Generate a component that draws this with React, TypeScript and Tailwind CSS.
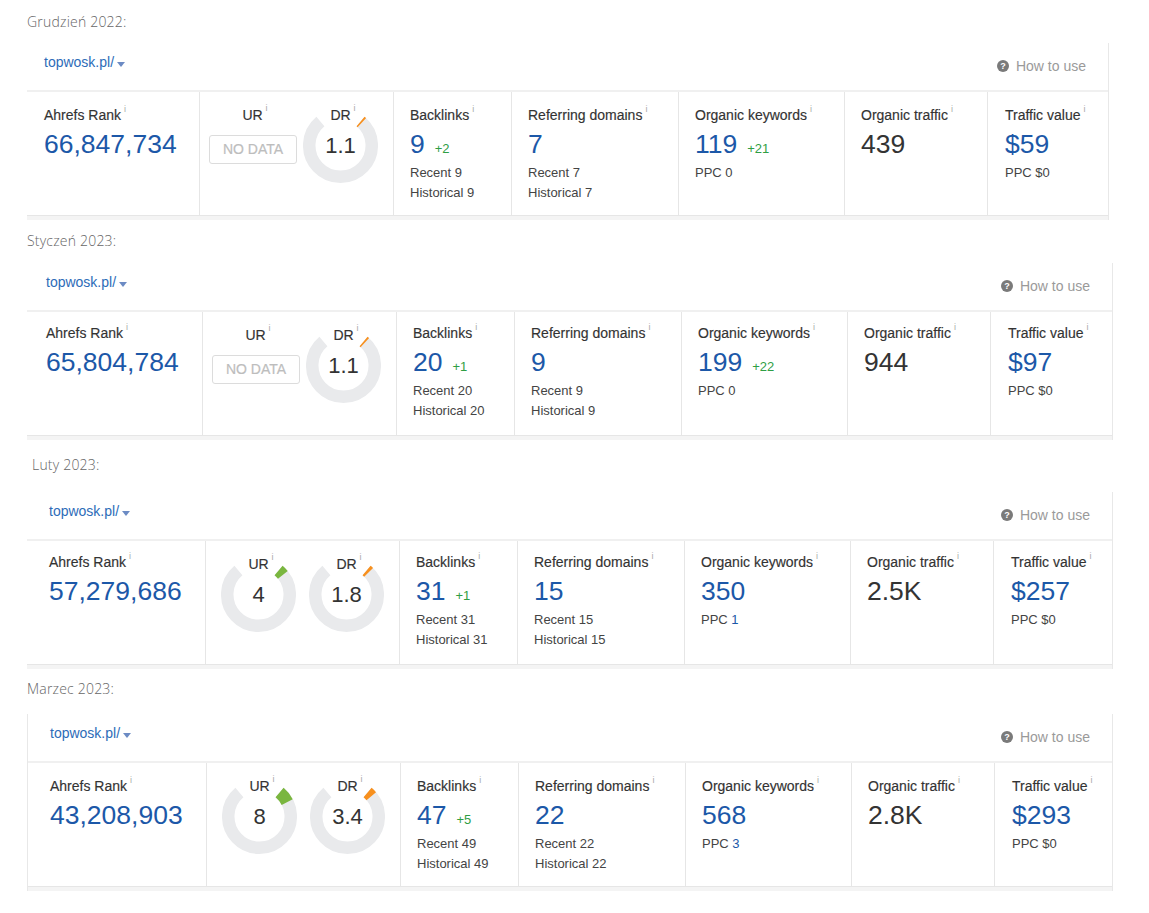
import React from 'react'

type Block = {
  label: string
  labelX: number
  mt: number
  gap: number
  pad: number
  col1: number
  cardW: number
  rowPt: number
  leftBorder?: boolean
  rank: string
  ur: number | null
  dr: number
  backlinks: string
  blDelta?: string
  blRecent: string
  blHist: string
  rd: string
  rdRecent: string
  rdHist: string
  ok: string
  okDelta?: string
  ppc: string
  ppcBlue?: boolean
  ot: string
  tv: string
}

const blocks: Block[] = [
  {
    label: 'Grudzień 2022:', labelX: 27, mt: 12, gap: 11, pad: 17, col1: 173, cardW: 1082, rowPt: 14,
    rank: '66,847,734', ur: null, dr: 1.1,
    backlinks: '9', blDelta: '+2', blRecent: '9', blHist: '9',
    rd: '7', rdRecent: '7', rdHist: '7',
    ok: '119', okDelta: '+21', ppc: '0', ot: '439', tv: '$59',
  },
  {
    label: 'Styczeń 2023:', labelX: 27, mt: 11, gap: 12, pad: 19, col1: 176, cardW: 1086, rowPt: 12,
    rank: '65,804,784', ur: null, dr: 1.1,
    backlinks: '20', blDelta: '+1', blRecent: '20', blHist: '20',
    rd: '9', rdRecent: '9', rdHist: '9',
    ok: '199', okDelta: '+22', ppc: '0', ot: '944', tv: '$97',
  },
  {
    label: 'Luty 2023:', labelX: 32, mt: 15, gap: 17, pad: 22, col1: 179, cardW: 1086, rowPt: 12,
    rank: '57,279,686', ur: 4, dr: 1.8,
    backlinks: '31', blDelta: '+1', blRecent: '31', blHist: '31',
    rd: '15', rdRecent: '15', rdHist: '15',
    ok: '350', ppc: '1', ppcBlue: true, ot: '2.5K', tv: '$257',
  },
  {
    label: 'Marzec 2023:', labelX: 27, mt: 10, gap: 15, pad: 22, col1: 179, cardW: 1086, rowPt: 14, leftBorder: true,
    rank: '43,208,903', ur: 8, dr: 3.4,
    backlinks: '47', blDelta: '+5', blRecent: '49', blHist: '49',
    rd: '22', rdRecent: '22', rdHist: '22',
    ok: '568', ppc: '3', ppcBlue: true, ot: '2.8K', tv: '$293',
  },
]

// point on the ring, angle clockwise from 12 o'clock
const pt = (deg: number) => {
  const r = 31.25
  const a = (deg * Math.PI) / 180
  return `${(37.5 + r * Math.sin(a)).toFixed(2)} ${(37.5 - r * Math.cos(a)).toFixed(2)}`
}

const Info = () => (
  <span className="absolute -right-[5px] -top-[2px] text-[9px] leading-none text-[#aaa] [-webkit-text-stroke:0px]">i</span>
)

const Gauge = ({ name, value, color }: { name: string; value: number | null; color: string }) => {
  const end = 40 + (280 * (value ?? 0)) / 100
  return (
    <div className="relative w-[75px] h-[92px]">
      {value !== null ? (
        <svg width="75" height="75" viewBox="0 0 75 75" className="absolute left-0 top-[16px]">
          <path d={`M ${pt(40)} A 31.25 31.25 0 1 1 ${pt(320)}`} fill="none" stroke="#e9eaec" strokeWidth="12.5" />
          <path d={`M ${pt(40)} A 31.25 31.25 0 0 1 ${pt(end)}`} fill="none" stroke={color} strokeWidth="12.5" />
        </svg>
      ) : (
        <div className="absolute left-[-6px] top-[43px] w-[88px] h-[29px] border border-[#dcdcdc] rounded-[3px] flex items-center justify-center text-[14px] text-[#bdbdbd] [-webkit-text-stroke:0.2px_#bdbdbd]">
          NO DATA
        </div>
      )}
      <div className="absolute left-0 right-0 top-[14px] flex justify-center text-[14px] leading-[18px] text-[#333] [-webkit-text-stroke:0.15px_#333]">
        <span className="relative">
          {name}
          <Info />
        </span>
      </div>
      {value !== null && (
        <div className="absolute left-0 top-[16px] w-[75px] h-[75px] flex items-center justify-center text-[22px] text-[#333]">
          {value}
        </div>
      )}
    </div>
  )
}

const Title = ({ children }: { children: React.ReactNode }) => (
  <div className="text-[14px] leading-[18px] text-[#333] [-webkit-text-stroke:0.15px_#333]">
    <span className="relative">
      {children}
      <Info />
    </span>
  </div>
)

const Value = ({ children, dark }: { children: React.ReactNode; dark?: boolean }) => (
  <div className={`mt-[5px] h-[30px] text-[26.5px] leading-[30px] whitespace-nowrap ${dark ? 'text-[#333]' : 'text-[#1c58a8]'}`}>
    {children}
  </div>
)

const Sub = ({ children }: { children: React.ReactNode }) => (
  <div className="text-[13px] leading-[20px] text-[#444]">{children}</div>
)

const Delta = ({ children }: { children: React.ReactNode }) => (
  <span className="ml-[10px] text-[13px] leading-none text-[#2f9e44]">{children}</span>
)

const Card = ({ b }: { b: Block }) => (
  <div style={{ marginTop: b.mt }}>
    <div style={{ paddingLeft: b.labelX }} className="font-['Open_Sans',sans-serif] font-light text-[14px] tracking-[0.2px] leading-[20px] text-[#666]">
      {b.label}
    </div>
    <div
      style={{ marginTop: b.gap, width: b.cardW }}
      className={`ml-[27px] border-r border-[#e8e8e8] bg-white font-['Liberation_Sans',Arial,sans-serif] ${b.leftBorder ? 'border-l' : ''}`}
    >
      {/* header */}
      <div style={{ paddingLeft: b.pad }} className="h-[49px] flex justify-between pr-[22px] border-b-2 border-[#f0f0f0]">
        <div className="mt-[10px] h-[18px] flex items-center text-[14px] text-[#2d6cb8]">
          topwosk.pl/
          <svg width="8" height="5" viewBox="0 0 8 5" className="ml-[3px] mt-[4px]">
            <path d="M0 0 H8 L4 5 Z" fill="#6c8bc4" />
          </svg>
        </div>
        <div className="mt-[14px] h-[18px] flex items-center text-[14px] text-[#9a9a9a]">
          <span className="w-[12px] h-[12px] rounded-full bg-[#7a7a7a] text-white text-[9px] font-bold leading-none flex items-center justify-center mr-[7px]">?</span>
          How to use
        </div>
      </div>
      {/* metrics */}
      <div className="flex h-[124px] border-b border-[#e6e6e6]">
        <div style={{ width: b.col1, paddingLeft: b.pad, paddingTop: b.rowPt }} className="border-r border-[#e6e6e6]">
          <Title>Ahrefs Rank</Title>
          <Value>{b.rank}</Value>
        </div>
        <div className="w-[194px] border-r border-[#e6e6e6] flex gap-[13px] pl-[15px]">
          <Gauge name="UR" value={b.ur} color="#7ab63f" />
          <Gauge name="DR" value={b.dr} color="#f7901e" />
        </div>
        <div style={{ paddingTop: b.rowPt }} className="w-[118px] border-r border-[#e6e6e6] pl-[16px]">
          <Title>Backlinks</Title>
          <Value>
            {b.backlinks}
            {b.blDelta && <Delta>{b.blDelta}</Delta>}
          </Value>
          <div className="mt-[4px]">
            <Sub>Recent {b.blRecent}</Sub>
            <Sub>Historical {b.blHist}</Sub>
          </div>
        </div>
        <div style={{ paddingTop: b.rowPt }} className="w-[167px] border-r border-[#e6e6e6] pl-[16px]">
          <Title>Referring domains</Title>
          <Value>{b.rd}</Value>
          <div className="mt-[4px]">
            <Sub>Recent {b.rdRecent}</Sub>
            <Sub>Historical {b.rdHist}</Sub>
          </div>
        </div>
        <div style={{ paddingTop: b.rowPt }} className="w-[166px] border-r border-[#e6e6e6] pl-[16px]">
          <Title>Organic keywords</Title>
          <Value>
            {b.ok}
            {b.okDelta && <Delta>{b.okDelta}</Delta>}
          </Value>
          <div className="mt-[4px]">
            <Sub>
              PPC <span className={b.ppcBlue ? 'text-[#1c58a8]' : ''}>{b.ppc}</span>
            </Sub>
          </div>
        </div>
        <div style={{ paddingTop: b.rowPt }} className="w-[143px] border-r border-[#e6e6e6] pl-[16px]">
          <Title>Organic traffic</Title>
          <Value dark>{b.ot}</Value>
        </div>
        <div style={{ paddingTop: b.rowPt }} className="flex-1 pl-[17px]">
          <Title>Traffic value</Title>
          <Value>{b.tv}</Value>
          <div className="mt-[4px]">
            <Sub>PPC $0</Sub>
          </div>
        </div>
      </div>
      <div className="h-[4px] bg-[#f4f4f4]" />
    </div>
  </div>
)

const App = () => {
  return (
    <div className="min-h-[913px] w-[1149px] bg-white overflow-hidden">
      {blocks.map((b) => (
        <Card key={b.label} b={b} />
      ))}
    </div>
  )
}

export default App
